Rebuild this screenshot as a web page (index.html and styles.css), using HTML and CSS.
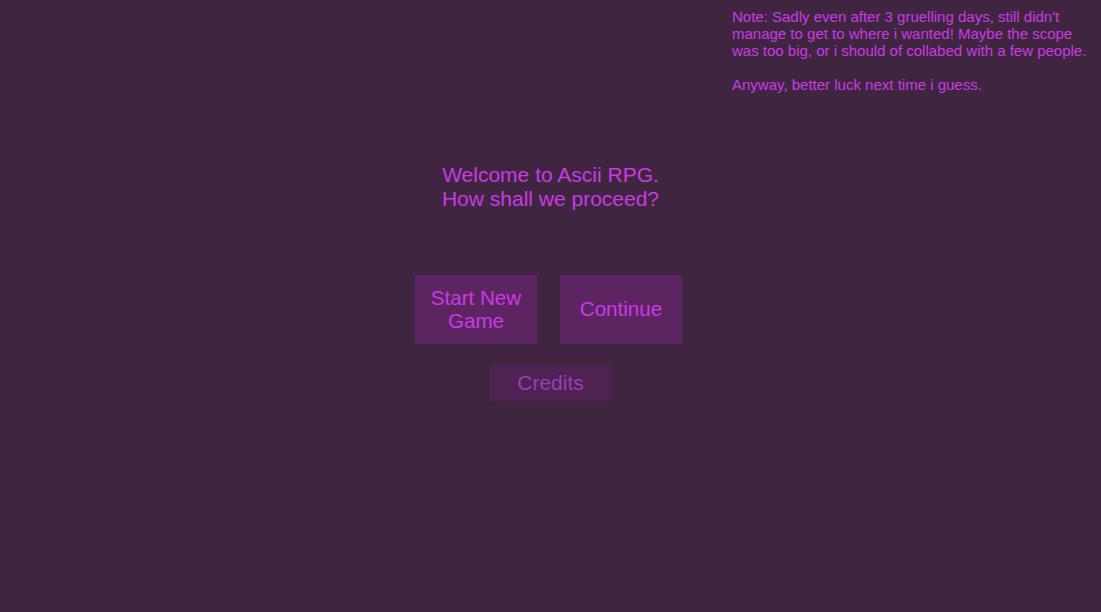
FILE: index.html
```html
<!DOCTYPE html>
<html>
<head>
<meta charset="utf-8">
<link rel="stylesheet" href="styles.css">
</head>
<body>
<div class="page">
  <p class="note">Note: Sadly even after 3 gruelling days, still didn't manage to get to where i wanted! Maybe the scope was too big, or i should of collabed with a few people.<br><br>Anyway, better luck next time i guess.</p>
  <h1 class="title">Welcome to Ascii RPG.<br>How shall we proceed?</h1>
  <div class="row">
    <button class="btn">Start New<br>Game</button>
    <button class="btn">Continue</button>
  </div>
  <button class="btn credits">Credits</button>
</div>
</body>
</html>
```
FILE: styles.css
```css
html, body {
  margin: 0;
  padding: 0;
  background: #402541;
}
.page {
  width: 1101px;
  height: 612px;
  display: flex;
  flex-direction: column;
  align-items: center;
  font-family: "Liberation Sans", Arial, sans-serif;
  color: #c93ae3;
}
.note {
  align-self: flex-end;
  box-sizing: border-box;
  width: 369px;
  margin: 7.5px 0 0 0;
  padding-right: 6px;
  font-size: 15px;
  line-height: 17px;
}
.title {
  margin: 70.5px 0 0 0;
  font-size: 21px;
  line-height: 24px;
  font-weight: normal;
  text-align: center;
}
.row {
  display: flex;
  gap: 23px;
  margin: 64px 4px 0 0;
}
.btn {
  display: flex;
  align-items: center;
  justify-content: center;
  box-sizing: border-box;
  width: 122px;
  height: 69px;
  padding: 0 0 2px 0;
  border: none;
  background: #5d2462;
  color: #c93ae3;
  font-family: "Liberation Sans", Arial, sans-serif;
  font-size: 20.6px;
  line-height: 23px;
  text-align: center;
}
.credits {
  height: 35px;
  margin-top: 22px;
  background: #4e2351;
  color: #9b3db8;
  font-size: 21px;
}
```
